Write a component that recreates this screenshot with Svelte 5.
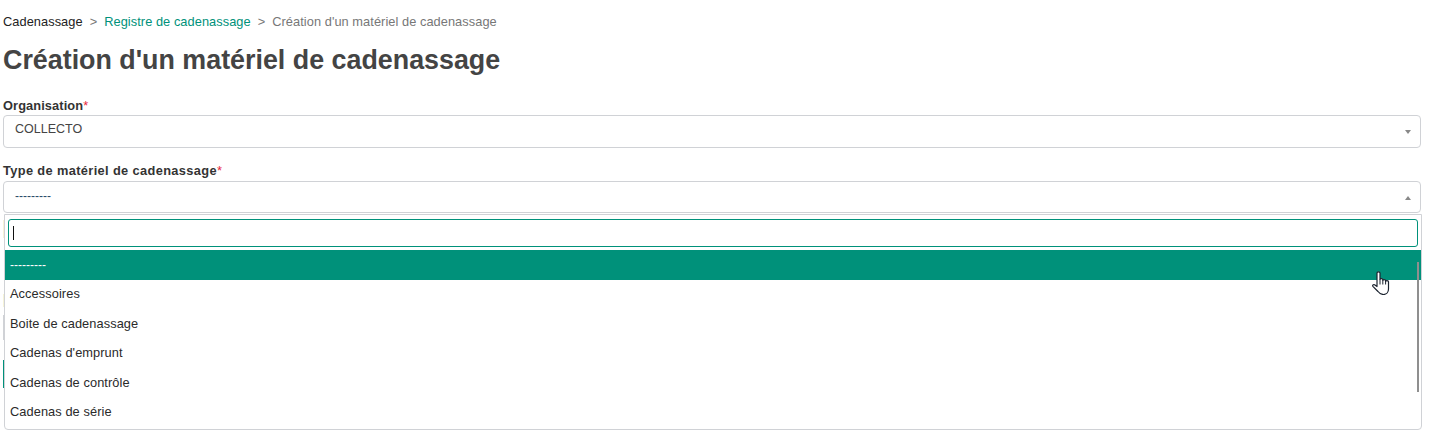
<script lang="ts">
	const options = ['Accessoires', 'Boite de cadenassage', "Cadenas d'emprunt", 'Cadenas de contrôle', 'Cadenas de série'];
</script>

<div class="page">
	<nav class="crumbs">
		<span class="crumb-root">Cadenassage</span>
		<span class="sep">&gt;</span>
		<span class="crumb-link">Registre de cadenassage</span>
		<span class="sep">&gt;</span>
		<span class="crumb-current">Création d'un matériel de cadenassage</span>
	</nav>

	<h1>Création d'un matériel de cadenassage</h1>

	<div class="field">
		<div class="label">Organisation<span class="req">*</span></div>
		<div class="select">
			<span>COLLECTO</span>
			<i class="arrow down"></i>
		</div>
	</div>

	<div class="field open">
		<div class="label wide">Type de matériel de cadenassage<span class="req">*</span></div>
		<div class="select">
			<span class="placeholder">---------</span>
			<i class="arrow up"></i>
		</div>
		<div class="dropdown">
			<!-- bits of the form underneath that stick out left of the list -->
			<i class="peek yellow-a"></i>
			<i class="peek yellow-b"></i>
			<i class="peek grey"></i>
			<i class="peek teal"></i>
			<div class="search"><span class="caret"></span></div>
			<ul>
				<li class="active">---------</li>
				{#each options as option}
					<li>{option}</li>
				{/each}
			</ul>
			<div class="scrollbar"></div>
			<svg class="cursor" width="18" height="24" viewBox="0 0 18 24">
				<path d="M5 2c0-1.600 3-1.600 3 0v6.500c0-1.300 2.800-1.300 2.800 0v1c0-1.200 2.800-1.200 2.800 0v1c0-1.100 2.900-1.100 2.900.2V18c0 3.200-2 5.500-5 5.500-2.500 0-4-1-5.500-3L.9 15.300c-.7-1 .5-2.300 1.700-1.500L5 15.500z" fill="#fff" stroke="#1c2430" stroke-width="1.200" stroke-linejoin="round" />
				<path d="M8 8.500v5M10.800 9.500v4M13.600 10.500v3" stroke="#1c2430" stroke-width="1" fill="none" />
			</svg>
		</div>
	</div>
</div>

<style>
	:global(body) {
		margin: 0;
		background: #fff;
		overflow: hidden;
	}

	.page {
		height: 441px;
		padding: 14px 11px 0 3px;
		box-sizing: border-box;
		font-family: 'Liberation Sans', Arial, sans-serif;
		font-size: 12.8px;
		color: #444;
	}

	.crumbs {
		display: flex;
		gap: 7px;
		line-height: 15px;
		letter-spacing: 0.06px;
	}

	.crumb-root {
		color: #222;
	}

	.sep {
		color: #777;
	}

	.crumb-link {
		color: #00917a;
	}

	.crumb-current {
		color: #777;
	}

	h1 {
		margin: 14px 0 0;
		font-size: 26.85px;
		line-height: 34px;
		font-weight: 700;
		color: #444;
	}

	.field {
		margin-top: 21px;
	}

	.field + .field {
		margin-top: 15px;
	}

	.label {
		font-weight: 700;
		line-height: 15px;
		letter-spacing: 0.1px;
		color: #333;
	}

	.label.wide {
		letter-spacing: 0.37px;
	}

	.req {
		color: #e8273a;
		font-weight: 400;
	}

	.select {
		position: relative;
		height: 33px;
		margin-top: 2px;
		padding: 0 11px 5px;
		box-sizing: border-box;
		display: flex;
		align-items: center;
		border: 1px solid #d0d2d6;
		border-radius: 4px;
		line-height: 26px;
		font-size: 12.5px;
	}

	.open .select {
		height: 32px;
		margin-top: 3px;
		padding-bottom: 2px;
	}

	.placeholder {
		color: #2a4a68;
		font-size: 12px;
	}

	.arrow {
		position: absolute;
		right: 9px;
		top: 14px;
		border-left: 3px solid transparent;
		border-right: 3px solid transparent;
	}

	.arrow.down {
		border-top: 4px solid #888;
	}

	.arrow.up {
		border-bottom: 4px solid #888;
	}

	.open {
		position: relative;
	}

	.dropdown {
		position: relative;
		margin: 1px -1px 0 1px;
		height: 216px;
		box-sizing: border-box;
		border: 1px solid #d0d2d6;
		border-radius: 0 0 4px 4px;
		background: #fff;
		padding-top: 4px;
	}

	.peek {
		position: absolute;
		left: -2px;
		width: 1px;
	}

	.yellow-a {
		top: 5px;
		height: 18px;
		background: #f6f3d8;
	}

	.yellow-b {
		top: 79px;
		height: 13px;
		background: #f6f3d8;
	}

	.grey {
		top: 100px;
		height: 25px;
		background: #d0d2d6;
	}

	.teal {
		top: 145px;
		height: 28px;
		background: #00917a;
	}

	.search {
		height: 28px;
		margin: 0 3px;
		box-sizing: border-box;
		border: 1px solid #00917a;
		border-radius: 3px;
		display: flex;
		align-items: center;
		padding-left: 4px;
	}

	.caret {
		width: 1px;
		height: 14px;
		background: #111;
	}

	ul {
		list-style: none;
		margin: 3px 0 0;
		padding: 0;
	}

	li {
		height: 29.5px;
		line-height: 28px;
		padding-left: 5px;
		color: #2a2a2a;
		letter-spacing: 0.08px;
	}

	li.active {
		background: #00917a;
		color: #fff;
		height: 30px;
		line-height: 30px;
		font-size: 12px;
		letter-spacing: 0;
	}

	.scrollbar {
		position: absolute;
		right: 2px;
		top: 47px;
		width: 2px;
		height: 130px;
		background: #8f8f8f;
	}

	.cursor {
		position: absolute;
		left: 1367px;
		top: 56px;
	}
</style>
